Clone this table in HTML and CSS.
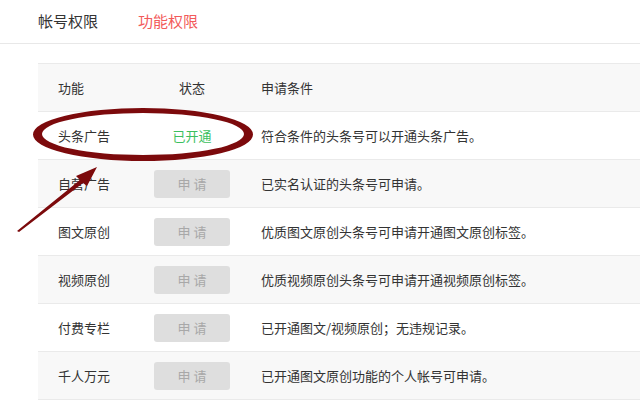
FILE: index.html
```html
<!DOCTYPE html>
<html lang="zh-CN">
<head>
  <meta charset="UTF-8" />
  <title>功能权限</title>
  <link rel="stylesheet" href="styles.css">
</head>
<body>

  <!-- Tabs -->
  <div class="tabs">
    <span class="tab">帐号权限</span>
    <span class="tab active">功能权限</span>
  </div>

  <!-- Permission table -->
  <div class="perm-table">
    <div class="row head">
      <div class="cell name">功能</div>
      <div class="cell status">状态</div>
      <div class="cell cond">申请条件</div>
    </div>
    <div class="row">
      <div class="cell name">头条广告</div>
      <div class="cell status"><span class="opened">已开通</span></div>
      <div class="cell cond">符合条件的头条号可以开通头条广告。</div>
    </div>
    <div class="row">
      <div class="cell name">自营广告</div>
      <div class="cell status"><button class="apply">申 请</button></div>
      <div class="cell cond">已实名认证的头条号可申请。</div>
    </div>
    <div class="row">
      <div class="cell name">图文原创</div>
      <div class="cell status"><button class="apply">申 请</button></div>
      <div class="cell cond">优质图文原创头条号可申请开通图文原创标签。</div>
    </div>
    <div class="row">
      <div class="cell name">视频原创</div>
      <div class="cell status"><button class="apply">申 请</button></div>
      <div class="cell cond">优质视频原创头条号可申请开通视频原创标签。</div>
    </div>
    <div class="row">
      <div class="cell name">付费专栏</div>
      <div class="cell status"><button class="apply">申 请</button></div>
      <div class="cell cond">已开通图文/视频原创；无违规记录。</div>
    </div>
    <div class="row">
      <div class="cell name">千人万元</div>
      <div class="cell status"><button class="apply">申 请</button></div>
      <div class="cell cond">已开通图文原创功能的个人帐号可申请。</div>
    </div>
  </div>

  <!-- Hand-drawn annotation -->
  <svg class="mark" width="640" height="407" viewBox="0 0 640 407">
    <path fill="#7c0a0c" fill-rule="evenodd"
      d="M33,134.5 a110,26.5 0 1,0 220,0 a110,26.5 0 1,0 -220,0 Z
         M42,134 a101,21 0 1,0 202,0 a101,21 0 1,0 -202,0 Z" />
    <polygon points="17,231 80,180 76,176 97,167 87,186 83,183 19,232" fill="#7c0a0c" />
  </svg>

</body>
</html>
```

FILE: styles.css
```css
body {
  margin: 0;
  font-family: "Noto Sans CJK SC", "Noto Sans", sans-serif;
  color: #333;
  background: #fff;
  position: relative;
  height: 407px;
  overflow: hidden;
}

.tabs {
  height: 44px;
  border-bottom: 1px solid #e8e8e8;
  display: flex;
  align-items: center;
  gap: 40px;
  padding-left: 38px;
  box-sizing: border-box;
  padding-bottom: 2px;
}

.tab {
  font-size: 15px;
  color: #333;
}

.tab.active {
  color: #f25a5a;
}

.perm-table {
  margin: 19px 0 0 38px;
  border-top: 1px solid #eaeaea;
  font-size: 13px;
}

.row {
  display: grid;
  grid-template-columns: 116px 76px 1fr;
  height: 48px;
  box-sizing: border-box;
  border-bottom: 1px solid #eaeaea;
  background: #fff;
}

.row:nth-child(odd) {
  background: #f8f8f8;
}

.cell {
  display: flex;
  align-items: center;
}

.name {
  padding-left: 20px;
}

.status {
  justify-content: center;
}

.cond {
  padding-left: 31px;
}

.opened {
  color: #3cbf5e;
}

.apply {
  width: 76px;
  height: 28px;
  border: none;
  border-radius: 3px;
  background: #dedede;
  color: #a8a8a8;
  font-family: inherit;
  font-size: 13px;
  padding: 0;
}

.mark {
  position: absolute;
  left: 0;
  top: 0;
  pointer-events: none;
}
```
